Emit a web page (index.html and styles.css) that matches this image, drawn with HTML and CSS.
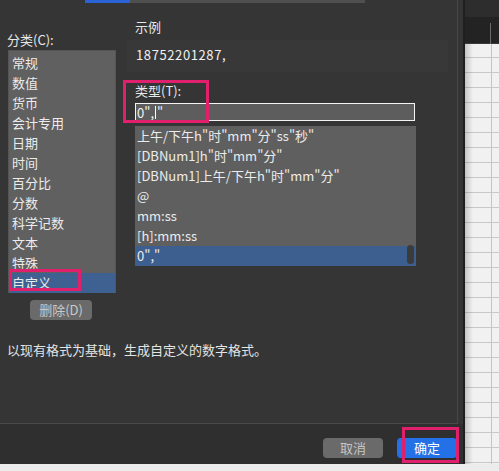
FILE: index.html
```html
<!DOCTYPE html>
<html lang="zh-CN">
<head>
<meta charset="utf-8">
<title>设置单元格格式</title>
<link rel="stylesheet" href="styles.css">
</head>
<body>
<div class="screen">
  <div class="top">
    <div class="dialog">
      <div class="panel">
        <div class="group">
          <div class="tabbar"><span class="tab-active"></span><span class="tab-rest"></span></div>
          <div class="cols">
            <div class="left">
              <div class="label">分类(C):</div>
              <ul class="cat-list">
                <li>常规</li>
                <li>数值</li>
                <li>货币</li>
                <li>会计专用</li>
                <li>日期</li>
                <li>时间</li>
                <li>百分比</li>
                <li>分数</li>
                <li>科学记数</li>
                <li>文本</li>
                <li>特殊</li>
                <li class="sel">自定义</li>
              </ul>
              <div class="btn btn-del">删除(D)</div>
            </div>
            <div class="right">
              <div class="label r-label">示例</div>
              <div class="sample">18752201287,</div>
              <div class="label r-label type-label">类型(T):</div>
              <div class="input">0",<span class="caret"></span>"</div>
              <div class="fmt-list">
                <ul>
                  <li>上午/下午h"时"mm"分"ss"秒"</li>
                  <li>[DBNum1]h"时"mm"分"</li>
                  <li>[DBNum1]上午/下午h"时"mm"分"</li>
                  <li>@</li>
                  <li>mm:ss</li>
                  <li>[h]:mm:ss</li>
                  <li class="sel">0","</li>
                </ul>
                <span class="thumb"></span>
              </div>
            </div>
          </div>
          <p class="desc">以现有格式为基础，生成自定义的数字格式。</p>
        </div>
      </div>
      <div class="footer">
        <div class="btn btn-cancel">取消</div>
        <div class="btn btn-ok">确定</div>
      </div>
    </div>
    <div class="divider"></div>
    <div class="sheet">
      <div class="sheet-head"></div>
      <div class="sheet-bar"><span class="tick"></span></div>
      <div class="sheet-cells"></div>
    </div>
  </div>
  <div class="bottom"></div>

  <span class="mark mark-cat"></span>
  <span class="mark mark-type"></span>
  <span class="mark mark-ok"></span>
</div>
</body>
</html>
```

FILE: styles.css
```css
* { box-sizing: border-box; }
html, body { margin: 0; padding: 0; }
body {
  background: #2f2f2f;
  font-family: "Noto Sans CJK SC", "Noto Sans", sans-serif;
  font-size: 13px;
  color: #e6e6e6;
}
.screen {
  position: relative;
  width: 499px;
  height: 471px;
  overflow: hidden;
  display: flex;
  flex-direction: column;
}
.top {
  display: flex;
  height: 464px;
}
.dialog {
  width: 463px;
  display: flex;
  flex-direction: column;
}
.panel {
  height: 424px;
  background: #353535;
}
.group {
  width: 458px;
  height: 424px;
  border-right: 1px solid #474747;
  border-bottom: 1px solid #4a4a4a;
  display: flex;
  flex-direction: column;
}
.tabbar {
  display: flex;
  height: 3px;
  margin-left: 85px;
}
.tab-active { width: 45px; background: #2a63d6; }
.tab-rest { width: 235px; background: #4f4f4f; }

.cols {
  display: flex;
  height: 317px;
}
.left {
  width: 108px;
  margin-left: 8px;
  padding-top: 29px;
  display: flex;
  flex-direction: column;
}
.label {
  line-height: 16px;
  height: 16px;
  color: #e8e8e8;
  white-space: nowrap;
}
.left .label { margin-left: -1px; }
.cat-list {
  list-style: none;
  margin: 2px 0 0;
  padding: 2px 0 0;
  height: 243px;
  background: #606060;
  border: 1px solid #555;
}
.cat-list li {
  height: 20px;
  line-height: 20px;
  padding-left: 3px;
  color: #ececec;
}
.cat-list li.sel { background: #3f6192; }
.btn {
  height: 20px;
  line-height: 20px;
  text-align: center;
  border-radius: 4px;
  font-size: 13px;
}
.btn-del {
  width: 62px;
  margin: 7px 0 0 22px;
  background: #6a6a6a;
  color: #c9c9c9;
}
.right {
  width: 321px;
  margin-left: 11px;
  padding-top: 16px;
  display: flex;
  flex-direction: column;
}
.r-label { padding-left: 8px; }
.sample {
  margin-top: 5px;
  height: 32px;
  padding: 7px 0 0 9px;
  line-height: 16px;
  background: #383838;
  color: #f0f0f0;
  letter-spacing: 0.6px;
}
.type-label { margin-top: 11px; }
.input {
  margin: 4px 0 0 8px;
  width: 280px;
  height: 18px;
  border: 1px solid #f4f4f4;
  background: #5d5d5d;
  line-height: 15px;
  padding-left: 1px;
  color: #f2f2f2;
  display: flex;
  align-items: center;
}
.caret {
  display: inline-block;
  width: 1px;
  height: 13px;
  background: #ffffff;
  margin: 0 1px;
}
.fmt-list {
  position: relative;
  margin: 5px 0 0 8px;
  width: 281px;
  height: 140px;
  background: #5f5f5f;
}
.fmt-list ul {
  list-style: none;
  margin: 0;
  padding: 0;
}
.fmt-list li {
  height: 20px;
  line-height: 20px;
  padding-left: 2px;
  color: #ececec;
  white-space: nowrap;
}
.fmt-list li.sel { background: #3d5f8f; }
.thumb {
  position: absolute;
  right: 2px;
  top: 119px;
  width: 7px;
  height: 19px;
  border-radius: 4px;
  background: #3b3b3b;
}
.desc {
  margin: 22px 0 0 7px;
  line-height: 16px;
  color: #e4e4e4;
}

.footer {
  height: 40px;
  background: #2f2f2f;
  display: flex;
  justify-content: flex-end;
  gap: 14px;
  padding: 14px 6px 0 0;
}
.btn-cancel {
  width: 60px;
  background: #6a6a6a;
  color: #c4c4c4;
}
.btn-ok {
  width: 60px;
  background: #2470e6;
  color: #ffffff;
}

.divider {
  width: 2px;
  background: #1f1f1f;
}
.sheet {
  width: 34px;
  display: flex;
  flex-direction: column;
}
.sheet-head {
  height: 17px;
  background: #2d2d2d;
}
.sheet-bar {
  position: relative;
  height: 27px;
  background: #232323;
  border-bottom: 1px solid #3a3a3a;
}
.tick {
  position: absolute;
  left: 25px;
  top: 6px;
  width: 1px;
  height: 21px;
  background: #6a6a6a;
}
.sheet-cells {
  flex: 1;
  background:
    linear-gradient(90deg, rgba(0,0,0,0.18), rgba(0,0,0,0) 8px),
    linear-gradient(90deg, transparent 26px, #c4c4c4 26px, #c4c4c4 27px, transparent 27px),
    repeating-linear-gradient(180deg, #f1f1f1 0, #f1f1f1 13px, #c8c8c8 13px, #c8c8c8 14px, #f1f1f1 14px, #f1f1f1 15px);
}
.bottom {
  height: 7px;
  background: #ececec;
}

.mark {
  position: absolute;
  border: 3px solid #e0206d;
}
.mark-cat { left: 9px; top: 269px; width: 72px; height: 22px; }
.mark-type { left: 123px; top: 80px; width: 86px; height: 43px; }
.mark-ok { left: 402px; top: 427px; width: 57px; height: 36px; }
```
